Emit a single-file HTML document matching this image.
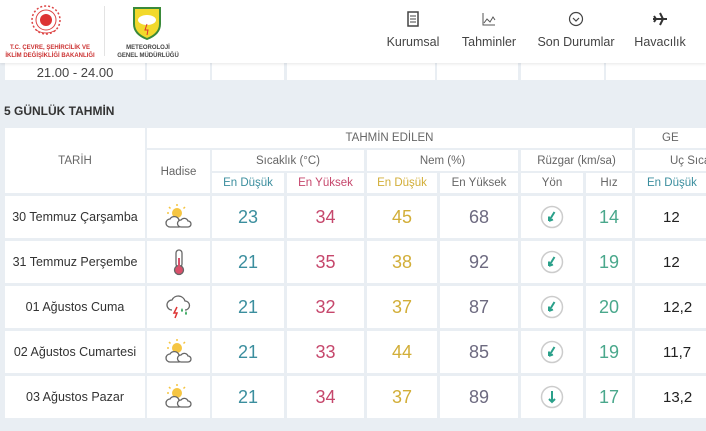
<!DOCTYPE html>
<html><head><meta charset="utf-8"><style>
*{margin:0;padding:0;box-sizing:border-box}
body{width:706px;height:431px;overflow:hidden;background:#e9eef3;font-family:"Liberation Sans",sans-serif;position:relative}
.c{position:absolute;background:#fff;display:flex;align-items:center;justify-content:center;text-align:center;color:#555;white-space:nowrap;overflow:hidden}
.h{font-size:11.5px;color:#666}
.n{font-size:18px}
.lo{color:#3b8e9e}.hi{color:#c6476c}.nl{color:#d2ae38}.nh{color:#6d6a80}.hz{color:#4aa88c}
.nav{position:absolute;top:0;font-size:12.5px;color:#444;text-align:center;white-space:nowrap}
</style></head><body>
<div style="position:absolute;left:0;top:0;width:706px;height:63px;background:#fff;box-shadow:0 1px 3px rgba(0,0,0,.1);z-index:2">
 <svg style="position:absolute;left:30px;top:4px" width="32" height="34" viewBox="0 0 32 34"><circle cx="16" cy="16" r="14" fill="none" stroke="#d44" stroke-width="1.5" stroke-dasharray="2 2"/><circle cx="16" cy="16" r="10" fill="none" stroke="#d44"/><circle cx="16" cy="16" r="6" fill="#d33"/><path d="M6 26 Q16 32 26 26" stroke="#d44" fill="none"/></svg>
 <div style="position:absolute;left:2px;top:44px;width:96px;font-size:6px;font-weight:bold;color:#c33;text-align:center;line-height:8px">T.C. ÇEVRE, ŞEHİRCİLİK VE<br>İKLİM DEĞİŞİKLİĞİ BAKANLIĞI</div>
 <div style="position:absolute;left:104px;top:6px;width:1px;height:50px;background:#e3e3e3"></div>
 <svg style="position:absolute;left:132px;top:6px" width="30" height="34" viewBox="0 0 30 34"><path d="M2 2H28V18Q28 28 15 33Q2 28 2 18Z" fill="#f2d92c" stroke="#3a8a3a" stroke-width="2"/><ellipse cx="15" cy="14" rx="9" ry="5" fill="#fff"/><path d="M15 18l-2 6h3l-1 5" stroke="#d33" fill="none"/></svg>
 <div style="position:absolute;left:116px;top:44px;width:64px;font-size:6px;font-weight:bold;color:#444;text-align:center;line-height:8px">METEOROLOJİ<br>GENEL MÜDÜRLÜĞÜ</div>
 <div class="nav" style="left:383px;width:60px"><svg style="margin-top:11px" width="14" height="16" viewBox="0 0 14 16"><rect x="2" y="1" width="10" height="14" fill="none" stroke="#444" stroke-width="1.5"/><path d="M4 5h6M4 8h6M4 11h6" stroke="#444"/></svg><div style="margin-top:5px">Kurumsal</div></div>
 <div class="nav" style="left:457px;width:64px"><svg style="margin-top:11px" width="16" height="16" viewBox="0 0 16 16"><path d="M2 2V14H14M3 12L6 8 9 11 12 6 14 9" stroke="#555" fill="none"/></svg><div style="margin-top:5px">Tahminler</div></div>
 <div class="nav" style="left:534px;width:84px"><svg style="margin-top:11px" width="16" height="16" viewBox="0 0 16 16"><circle cx="8" cy="8" r="6.5" stroke="#444" fill="none" stroke-width="1.2"/><path d="M5 7l3 3 3-3" stroke="#444" fill="none" stroke-width="1.2"/></svg><div style="margin-top:5px">Son Durumlar</div></div>
 <div class="nav" style="left:632px;width:56px"><svg style="margin-top:11px" width="16" height="16" viewBox="0 0 16 16"><path d="M1 8H15M8 2L11 8 8 14M2 5L4 8 2 11" stroke="#333" stroke-width="2" fill="none"/></svg><div style="margin-top:5px">Havacılık</div></div>
</div>
<div class="c" style="left:5px;top:58px;width:140px;height:22px;font-size:13px;color:#444;align-items:flex-end">21.00 - 24.00</div>
<div class="c" style="left:147px;top:58px;width:63px;height:22px"></div>
<div class="c" style="left:212px;top:58px;width:72px;height:22px"></div>
<div class="c" style="left:287px;top:58px;width:148px;height:22px"></div>
<div class="c" style="left:437px;top:58px;width:81px;height:22px"></div>
<div class="c" style="left:521px;top:58px;width:83px;height:22px"></div>
<div class="c" style="left:606px;top:58px;width:100px;height:22px"></div>
<div style="position:absolute;left:4px;top:104px;font-size:12px;font-weight:bold;color:#333">5 GÜNLÜK TAHMİN</div>
<div class="c h" style="left:5px;top:128px;width:140px;height:65px">TARİH</div>
<div class="c h" style="left:147px;top:128px;width:485px;height:20px">TAHMİN EDİLEN</div>
<div class="c h" style="left:635px;top:128px;width:71px;height:20px;justify-content:flex-start;padding-left:27px">GE</div>
<div class="c h" style="left:147px;top:150px;width:63px;height:43px">Hadise</div>
<div class="c h" style="left:212px;top:150px;width:152px;height:21px">Sıcaklık (°C)</div>
<div class="c h" style="left:367px;top:150px;width:151px;height:21px">Nem (%)</div>
<div class="c h" style="left:521px;top:150px;width:111px;height:21px">Rüzgar (km/sa)</div>
<div class="c h" style="left:635px;top:150px;width:71px;height:21px;justify-content:flex-start;padding-left:35px">Uç Sıca</div>
<div class="c h lo" style="left:212px;top:173px;width:72px;height:20px">En Düşük</div>
<div class="c h hi" style="left:287px;top:173px;width:77px;height:20px">En Yüksek</div>
<div class="c h nl" style="left:367px;top:173px;width:70px;height:20px">En Düşük</div>
<div class="c h" style="left:440px;top:173px;width:78px;height:20px">En Yüksek</div>
<div class="c h" style="left:521px;top:173px;width:62px;height:20px">Yön</div>
<div class="c h" style="left:586px;top:173px;width:46px;height:20px">Hız</div>
<div class="c h lo" style="left:635px;top:173px;width:71px;height:20px;justify-content:flex-start;padding-left:12px">En Düşük</div>
<svg width="0" height="0" style="position:absolute"><defs>
<g id="pc"><circle cx="12" cy="10" r="5" fill="#f5c542"/><path d="M12 1v2M4 4l1.5 1.5M20 4l-1.5 1.5M2 10h2" stroke="#f5c542" stroke-width="1.5"/><path d="M5 24a4 4 0 0 1 0-8a5 5 0 0 1 9 1a3.5 3.5 0 0 1 0 7z" fill="#fff" stroke="#666" stroke-width="1.3"/><path d="M16 24a3.5 3.5 0 0 1 0-7a4 4 0 0 1 7 1a3 3 0 0 1 0 6z" fill="#fff" stroke="#666" stroke-width="1.3"/></g>
<g id="th"><rect x="11" y="2" width="6" height="17" rx="3" fill="#fff" stroke="#666" stroke-width="1.3"/><circle cx="14" cy="22" r="4.5" fill="#d9506a" stroke="#666" stroke-width="1.3"/><path d="M14 10v11" stroke="#d9506a" stroke-width="2"/></g>
<g id="st"><path d="M7 17a5 5 0 0 1 0-10a7 7 0 0 1 13 1a4.5 4.5 0 0 1 0 9" fill="none" stroke="#666" stroke-width="1.3"/><path d="M12 14l-3 6h3l-2 5" stroke="#d33" fill="none" stroke-width="1.5"/><path d="M17 15q-2 3 0 4q2-1 0-4M21 18q-2 3 0 4q2-1 0-4" fill="#3aa860"/></g>
<g id="wd"><circle cx="12" cy="12" r="10.5" fill="#fff" stroke="#ccc" stroke-width="1.5"/><path d="M14.5 7L9 16M9 16l0-4.5M9 16l4-1.5" stroke="#2aa08a" stroke-width="2" fill="none"/></g>
<g id="wd2"><circle cx="12" cy="12" r="10.5" fill="#fff" stroke="#ccc" stroke-width="1.5"/><path d="M12 6v11M9 14l3 3 3-3" stroke="#2aa08a" stroke-width="2" fill="none"/></g>
</defs></svg>
<div id="rows"></div>
<script>
var d=[["30 Temmuz Çarşamba","pc",23,34,45,68,"wd",14,"12"],["31 Temmuz Perşembe","th",21,35,38,92,"wd",19,"12"],["01 Ağustos Cuma","st",21,32,37,87,"wd",20,"12,2"],["02 Ağustos Cumartesi","pc",21,33,44,85,"wd",19,"11,7"],["03 Ağustos Pazar","pc",21,34,37,89,"wd2",17,"13,2"]];
var h="";d.forEach(function(r,i){var t=196+i*45,H=42;
function c(l,w,inner,cls,st){h+='<div class="c '+(cls||'')+'" style="left:'+l+'px;top:'+t+'px;width:'+w+'px;height:'+H+'px;'+(st||'')+'">'+inner+'</div>';}
c(5,140,r[0],'','font-size:12.5px;color:#333');
c(147,63,'<svg width="28" height="28" viewBox="0 0 28 28"><use href="#'+r[1]+'"/></svg>');
c(212,72,r[2],'n lo');c(287,77,r[3],'n hi');c(367,70,r[4],'n nl');c(440,78,r[5],'n nh');
c(521,62,'<svg width="24" height="24" viewBox="0 0 24 24"><use href="#'+r[6]+'"/></svg>');
c(586,46,r[7],'n hz');c(635,71,r[8],'','font-size:15px;color:#222;justify-content:flex-start;padding-left:28px');});
document.getElementById('rows').innerHTML=h;
</script>
</body></html>
